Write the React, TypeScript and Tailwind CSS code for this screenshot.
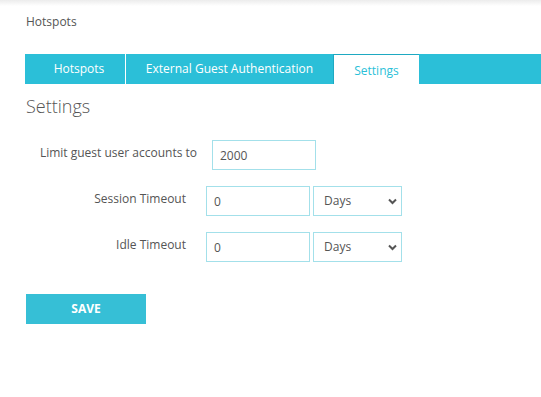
export default function App() {
  const rows = [
    { label: 'Session Timeout', value: '0' },
    { label: 'Idle Timeout', value: '0' },
  ];

  return (
    <div className="min-h-[397px] bg-white font-['Open_Sans',sans-serif] text-[#555]">
      <div className="h-[6px] bg-gradient-to-b from-[#ececec] to-white" />
      <div className="pl-[26px] pt-[8px] text-[12px] leading-[16px]">Hotspots</div>

      <div className="ml-[25px] mt-[24px] flex h-[30px] bg-[#2bbfd8] text-[12px] text-white">
        <div className="flex w-[101px] items-center justify-center border-r border-white pl-[8px]">Hotspots</div>
        <div className="flex w-[207px] items-center justify-center">External Guest Authentication</div>
        <div className="flex w-[86px] items-center justify-center border-l border-t border-[#1ea9c2] bg-white pt-[2px] text-[#2bbfd8]">
          Settings
        </div>
      </div>

      <div className="ml-[26px] mt-[10px] text-[18px] leading-[24px] font-light text-[#555]">Settings</div>

      <div className="mt-[22px] flex flex-col gap-[16px] text-[12px]">
        <div className="flex h-[30px] items-center">
          <div className="w-[197px] pb-[4px] text-right">Limit guest user accounts to</div>
          <input
            readOnly
            value="2000"
            className="ml-[15px] h-[30px] w-[104px] border border-[#a3e0ea] pl-[7px] text-[12px] text-[#555] outline-none"
          />
        </div>
        {rows.map((row) => (
          <div key={row.label} className="flex h-[30px] items-center">
            <div className="w-[186px] pb-[4px] text-right">{row.label}</div>
            <input
              readOnly
              value={row.value}
              className="ml-[20px] h-[30px] w-[104px] border border-[#a3e0ea] pl-[7px] text-[12px] text-[#555] outline-none"
            />
            <div className="relative ml-[3px] flex h-[30px] w-[89px] items-center border border-[#a3e0ea] pl-[10px]">
              <span>Days</span>
              <svg className="absolute right-[4px] top-[11px]" width="9" height="7" viewBox="0 0 9 7">
                <path d="M1 1.5 L4.5 5 L8 1.5" stroke="#555" strokeWidth="2" fill="none" />
              </svg>
            </div>
          </div>
        ))}
      </div>

      <button className="ml-[26px] mt-[32px] flex h-[30px] w-[120px] items-center justify-center bg-[#36bfd6] text-[12px] font-bold text-white">
        SAVE
      </button>
    </div>
  );
}
